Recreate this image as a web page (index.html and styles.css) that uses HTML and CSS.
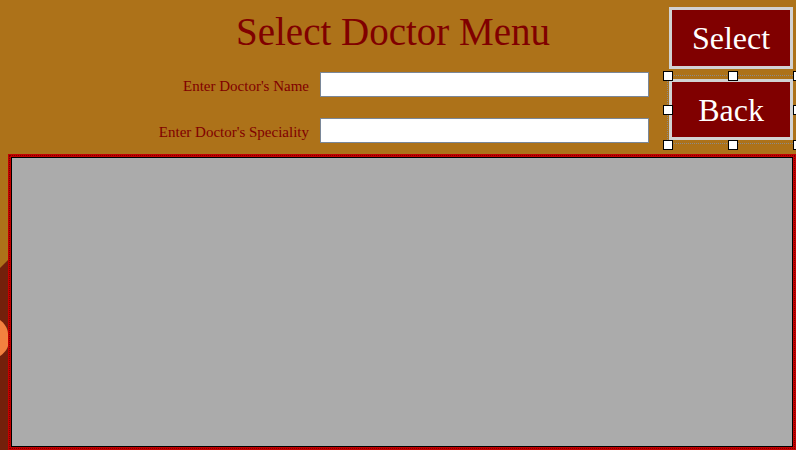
FILE: index.html
```html
<!DOCTYPE html>
<html>
<head>
<meta charset="utf-8">
<link rel="stylesheet" href="styles.css">
</head>
<body>
<div class="stage">
  <svg class="backdrop" width="8" height="200" viewBox="0 0 8 200" aria-hidden="true">
    <polygon points="0,18 8,10 8,200 0,200" fill="#73200b"/>
    <path d="M0,70 C4,73 8,78 8,84 L8,96 C7,100 3,104 0,106 Z" fill="#f2813f"/>
  </svg>
  <header class="header">
    <div class="form-area">
      <h1 class="title">Select Doctor Menu</h1>
      <div class="fields">
        <label class="field-label" for="docName">Enter Doctor's Name</label>
        <input class="field-input" id="docName" type="text">
        <label class="field-label" for="docSpec">Enter Doctor's Speciality</label>
        <input class="field-input" id="docSpec" type="text">
      </div>
    </div>
    <div class="actions">
      <button class="btn" type="button">Select</button>
      <button class="btn" type="button">Back</button>
    </div>
  </header>
  <div class="selection">
    <span class="handle h-tl"></span><span class="handle h-tm"></span><span class="handle h-tr"></span>
    <span class="handle h-ml"></span><span class="handle h-mr"></span>
    <span class="handle h-bl"></span><span class="handle h-bm"></span><span class="handle h-br"></span>
  </div>
  <section class="panel">
    <div class="panel-inner"></div>
  </section>
</div>
</body>
</html>
```
FILE: styles.css
```css
html, body {
  margin: 0;
  padding: 0;
}
body {
  width: 796px;
  height: 450px;
  overflow: hidden;
  background: #ad7219;
  font-family: "Liberation Serif", "Times New Roman", serif;
}
.stage {
  position: relative;
  width: 796px;
  height: 450px;
}
.backdrop {
  position: absolute;
  left: 0;
  top: 250px;
}
.header {
  display: flex;
  height: 154px;
}
.form-area {
  width: 669px;
  display: flex;
  flex-direction: column;
}
.title {
  margin: 0;
  padding: 9px 0 0 236px;
  font-weight: normal;
  font-size: 39px;
  line-height: 45px;
  color: #800000;
  white-space: nowrap;
}
.fields {
  margin-top: 18px;
  display: grid;
  grid-template-columns: 309px 329px;
  grid-auto-rows: 25px;
  column-gap: 11px;
  row-gap: 21px;
  align-items: center;
}
.field-label {
  text-align: right;
  font-size: 15px;
  padding-top: 3px;
  color: #800000;
  white-space: nowrap;
}
.field-input {
  box-sizing: border-box;
  height: 25px;
  margin: 0;
  border: 1px solid #7a8798;
  background: #fff;
  padding: 0 3px;
}
.actions {
  display: flex;
  flex-direction: column;
  gap: 10px;
  padding-top: 7px;
}
.btn {
  box-sizing: border-box;
  width: 124px;
  height: 62px;
  margin: 0;
  padding: 0;
  background: #800000;
  border: 3px solid #d2d2d2;
  color: #fff;
  font-family: "Liberation Serif", "Times New Roman", serif;
  font-size: 32px;
  line-height: 1;
}
.btn + .btn {
  height: 61px;
}
.selection {
  position: absolute;
  left: 667px;
  top: 75px;
  width: 130px;
  height: 69px;
  border: 1px dotted #8a8a8a;
  box-sizing: border-box;
}
.handle {
  position: absolute;
  width: 10px;
  height: 10px;
  box-sizing: border-box;
  background: #fff;
  border: 1px solid #000;
  margin: -5px 0 0 -5px;
}
.h-tl { left: 0; top: 0; }
.h-tm { left: 65px; top: 0; }
.h-tr { left: 130px; top: 0; }
.h-ml { left: 0; top: 34px; }
.h-mr { left: 130px; top: 34px; }
.h-bl { left: 0; top: 69px; }
.h-bm { left: 65px; top: 69px; }
.h-br { left: 130px; top: 69px; }
.panel {
  position: relative;
  margin-left: 8px;
  width: 788px;
  height: 296px;
  box-sizing: border-box;
  border: 3px solid #c40000;
  outline: 1px dotted #7a0000;
  outline-offset: -2px;
}
.panel-inner {
  box-sizing: border-box;
  height: 100%;
  border: 1px solid #000;
  background: #ababab;
}
```
